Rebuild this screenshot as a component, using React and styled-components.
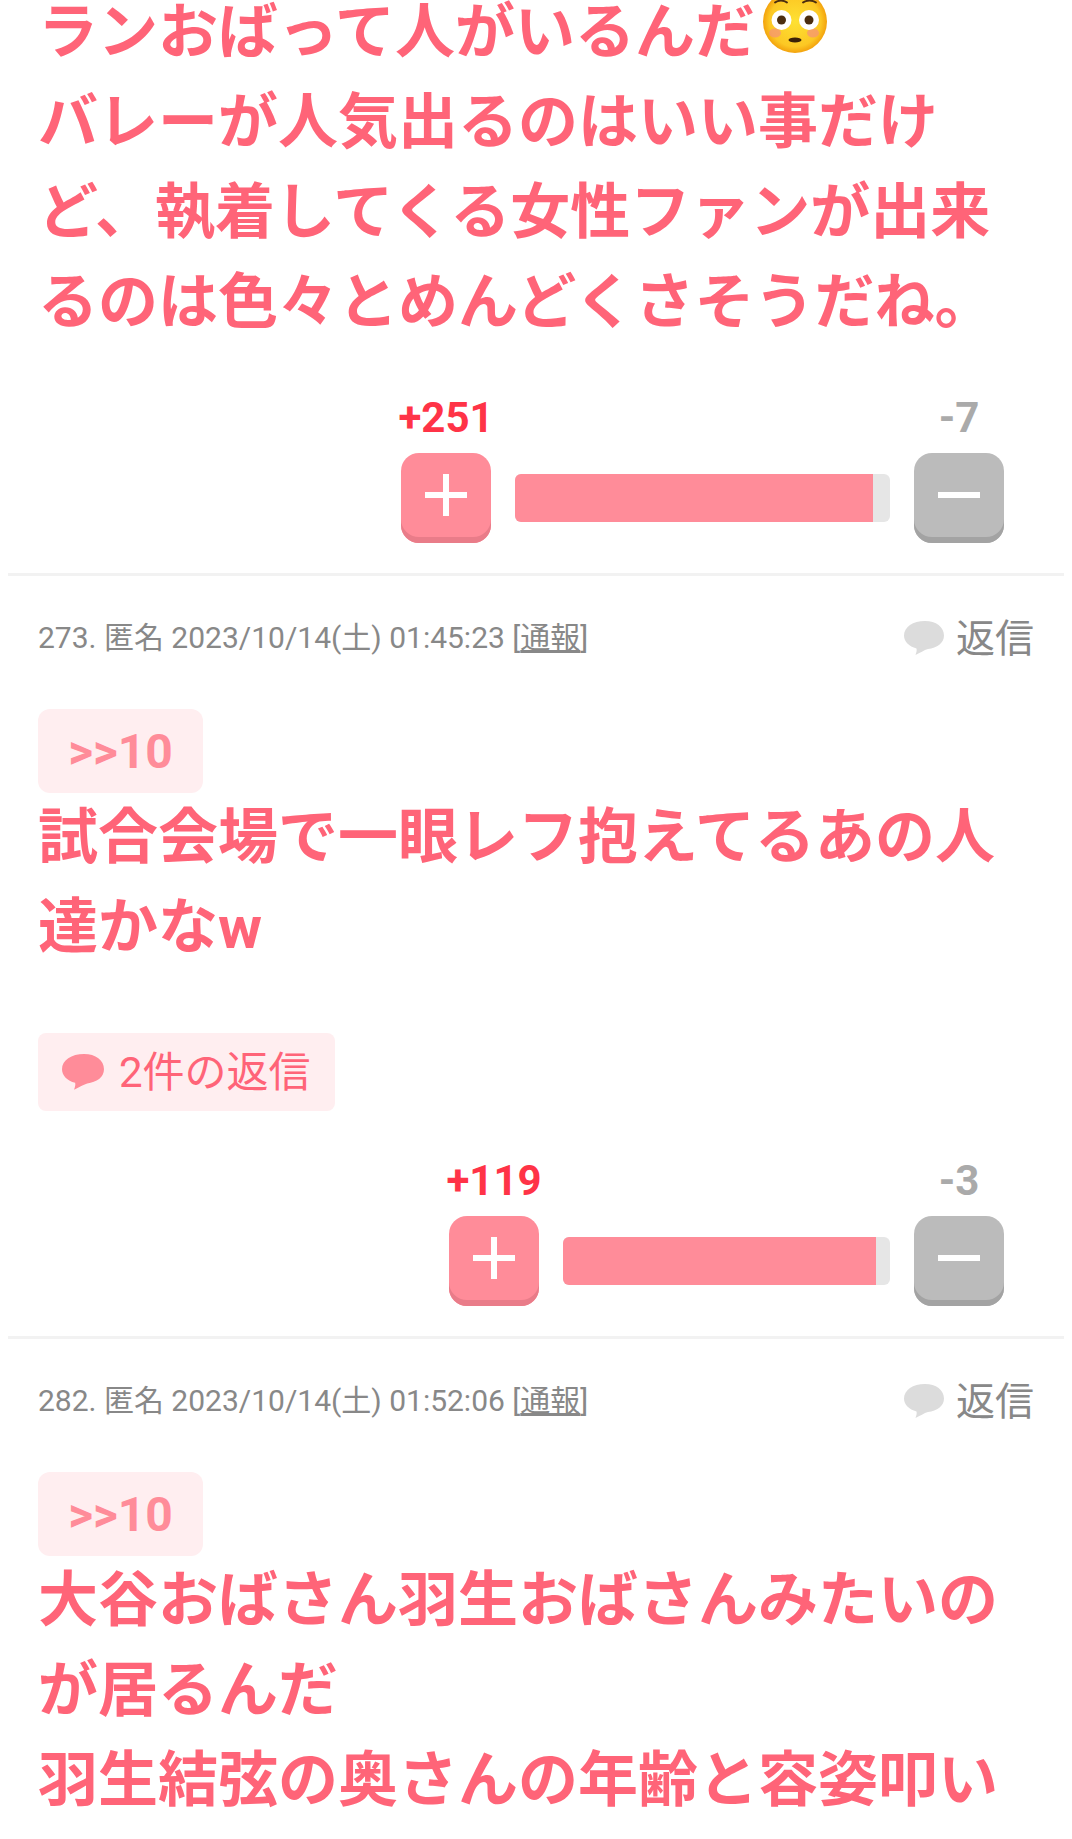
import styled, { createGlobalStyle } from 'styled-components'

const GlobalStyle = createGlobalStyle`
  html, body {
    margin: 0;
    background: #fff;
  }
  body {
    font-family: Roboto, "Noto Sans CJK JP", sans-serif;
  }
`

function Bubble({ color, width }) {
  return (
    <svg width={width} height={width * 0.85} viewBox="0 0 40 34" fill={color} aria-hidden="true">
      <path d="M21 0C32 0 40 6 40 14.500C40 22 33 27 24 28C20 29 16 32 11.500 34C12.500 31 13 29.500 12.500 27.500C5 25.500 0 20.500 0 14.500C0 6 9 0 21 0Z" />
    </svg>
  )
}

function FlushedFace() {
  return (
    <FaceIcon viewBox="0 0 64 63" aria-hidden="true">
      <defs>
        <radialGradient id="face" cx="50%" cy="50%" r="50%">
          <stop offset="0%" stopColor="#fee133" />
          <stop offset="80%" stopColor="#fcc824" />
          <stop offset="100%" stopColor="#f3a20d" />
        </radialGradient>
      </defs>
      <ellipse cx="32" cy="31.500" rx="32" ry="31.500" fill="url(#face)" />
      <ellipse cx="12" cy="43" rx="6" ry="4.500" fill="#f5917a" opacity="0.7" />
      <ellipse cx="50" cy="43" rx="6" ry="4.500" fill="#f5917a" opacity="0.7" />
      <circle cx="18.500" cy="30" r="10" fill="#fff" />
      <circle cx="46" cy="30" r="10" fill="#fff" />
      <circle cx="18.500" cy="30" r="4.500" fill="#4b2e10" />
      <circle cx="46" cy="30" r="4.500" fill="#4b2e10" />
      <path d="M12 12.500C15 10 21 10 24 12.500M40 12.500C43 10 50 10 53 12.500" fill="none" stroke="#4b2e10" strokeWidth="1.800" strokeLinecap="round" />
      <ellipse cx="32" cy="50" rx="6.500" ry="2.500" fill="#3a2108" />
    </FaceIcon>
  )
}

function Votes({ plus, minus, barWidth, fill }) {
  return (
    <VoteRow>
      <VoteColumn>
        <Count $plus>+{plus}</Count>
        <VoteButton $plus>
          <PlusMark />
        </VoteButton>
      </VoteColumn>
      <Bar $width={barWidth}>
        <BarFill style={{ width: `${fill}%` }} />
      </Bar>
      <VoteColumn>
        <Count>-{minus}</Count>
        <VoteButton>
          <MinusMark />
        </VoteButton>
      </VoteColumn>
    </VoteRow>
  )
}

function Meta({ info }) {
  return (
    <MetaRow>
      <MetaText>
        {info} [<ReportLink>通報</ReportLink>]
      </MetaText>
      <ReplyLink>
        <Bubble color="#dcdcdc" width={40} />
        <span>返信</span>
      </ReplyLink>
    </MetaRow>
  )
}

export default function App() {
  return (
    <Page>
      <GlobalStyle />
      <Comment>
        <FirstBody>
          ランおばって人がいるんだ
          <FlushedFace />
          <br />
          バレーが人気出るのはいい事だけど、執着してくる女性ファンが出来るのは色々とめんどくさそうだね。
        </FirstBody>
        <Votes plus={251} minus={7} barWidth={375} fill={95.500} />
      </Comment>
      <Comment>
        <Meta info="273. 匿名 2023/10/14(土) 01:45:23" />
        <Anchor>&gt;&gt;10</Anchor>
        <Body>試合会場で一眼レフ抱えてるあの人達かなw</Body>
        <RepliesTag>
          <Bubble color="#ff8c99" width={42} />
          <RepliesLabel>2件の返信</RepliesLabel>
        </RepliesTag>
        <Votes plus={119} minus={3} barWidth={327} fill={95.700} />
      </Comment>
      <Comment>
        <Meta info="282. 匿名 2023/10/14(土) 01:52:06" />
        <Anchor>&gt;&gt;10</Anchor>
        <Body>
          大谷おばさん羽生おばさんみたいのが居るんだ
          <br />
          羽生結弦の奥さんの年齢と容姿叩いてる人
        </Body>
      </Comment>
    </Page>
  )
}

const Page = styled.div`
  height: 1839px;
  padding: 0 8px;
  overflow: hidden;
  box-sizing: border-box;
`

const Comment = styled.section`
  padding: 0 30px 30px;
  border-bottom: 3px solid #f2f2f2;

  &:last-child {
    border-bottom: 0;
  }
`

const Body = styled.p`
  margin: 0;
  font-size: 60px;
  line-height: 90px;
  font-weight: 700;
  color: #ff6478;
`

const FirstBody = styled(Body)`
  margin-top: -12px;
`

const FaceIcon = styled.svg`
  display: inline-block;
  width: 64px;
  height: 63px;
  margin-left: 8px;
  vertical-align: 0;
`

const VoteRow = styled.div`
  display: flex;
  justify-content: flex-end;
  align-items: flex-end;
  gap: 24px;
  padding-right: 30px;
  margin-top: 47px;
`

const VoteColumn = styled.div`
  display: flex;
  flex-direction: column;
  align-items: center;
  width: 90px;
`

const Count = styled.div`
  font-size: 42px;
  line-height: 46px;
  font-weight: 700;
  margin-bottom: 12px;
  color: ${(p) => (p.$plus ? '#ff3347' : '#aaaaaa')};
`

const VoteButton = styled.div`
  position: relative;
  width: 90px;
  height: 90px;
  border-radius: 18px;
  box-shadow: inset 0 -6px 0 ${(p) => (p.$plus ? '#e97c89' : '#a3a3a3')};
  background: ${(p) => (p.$plus ? '#ff8c99' : '#bbbbbb')};
`

const MinusMark = styled.span`
  position: absolute;
  left: 24px;
  top: 39px;
  width: 42px;
  height: 6px;
  background: #fff;
`

const PlusMark = styled(MinusMark)`
  &::after {
    content: '';
    position: absolute;
    left: 18px;
    top: -18px;
    width: 6px;
    height: 42px;
    background: #fff;
  }
`

const Bar = styled.div`
  width: ${(p) => p.$width}px;
  height: 48px;
  margin-bottom: 21px;
  border-radius: 6px;
  overflow: hidden;
  background: #e6e6e6;
`

const BarFill = styled.div`
  height: 100%;
  background: #ff8c99;
`

const MetaRow = styled.div`
  display: flex;
  justify-content: space-between;
  align-items: center;
  padding-top: 34px;
  height: 50px;
  margin-bottom: 49px;
`

const MetaText = styled.div`
  font-size: 30px;
  color: #888888;
`

const ReportLink = styled.span`
  text-decoration: underline;
`

const ReplyLink = styled.div`
  display: flex;
  align-items: center;
  gap: 12px;
  font-size: 39px;
  color: #888888;

  svg {
    margin-top: 6px;
  }
`

const Anchor = styled.div`
  display: inline-flex;
  align-items: center;
  justify-content: center;
  box-sizing: border-box;
  width: 165px;
  height: 84px;
  border-radius: 12px;
  background: #ffeef0;
  color: #ff8c99;
  font-size: 48px;
  font-weight: 700;
  vertical-align: top;
`

const RepliesTag = styled.div`
  display: flex;
  align-items: center;
  gap: 15px;
  box-sizing: border-box;
  width: 297px;
  height: 78px;
  margin-top: 60px;
  padding-left: 24px;
  border-radius: 8px;
  background: #ffeef0;
  color: #ff6478;
  font-size: 42px;
`

const RepliesLabel = styled.span`
  padding-bottom: 8px;
`
